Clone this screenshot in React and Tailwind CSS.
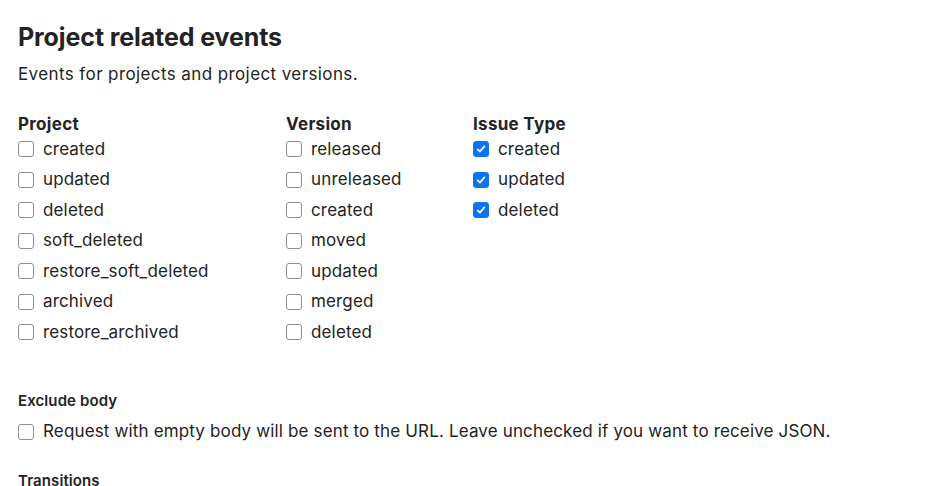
import React from 'react';

const Check = ({ checked }) => (
  <span
    className={`flex h-4 w-4 shrink-0 items-center justify-center rounded-[3px] border ${
      checked ? 'border-[#0b74f5] bg-[#0b74f5]' : 'border-[#8e8e93] bg-white'
    }`}
  >
    {checked && (
      <svg viewBox="0 0 16 16" className="h-3 w-3" fill="none">
        <path d="M3.5 8.5l3 3 6-7" stroke="white" strokeWidth="2.2" strokeLinecap="round" strokeLinejoin="round" />
      </svg>
    )}
  </span>
);

const Option = ({ label, checked = false }) => (
  <label className="flex h-[30.5px] items-center gap-[9px] text-[17px] tracking-[0.15px] text-[#232323]">
    <Check checked={checked} />
    <span>{label}</span>
  </label>
);

const Column = ({ title, items, checked = false, className = '' }) => (
  <div className={className}>
    <div className="mb-[-1px] text-[17px] font-bold leading-[22px] tracking-[0.3px] text-[#232323]">{title}</div>
    {items.map((item) => (
      <Option key={item} label={item} checked={checked} />
    ))}
  </div>
);

export default function App() {
  return (
    <div className="h-[486px] w-[936px] overflow-hidden bg-white px-[18px] pt-[21px] font-['Inter',sans-serif]">
      <h2 className="text-[25px] font-bold leading-[32px] tracking-[-0.1px] text-[#232323]">Project related events</h2>
      <p className="mt-[10px] text-[17px] leading-[22px] tracking-[0.4px] text-[#232323]">
        Events for projects and project versions.
      </p>

      <div className="mt-[28px] flex">
        <Column
          className="w-[268px]"
          title="Project"
          items={['created', 'updated', 'deleted', 'soft_deleted', 'restore_soft_deleted', 'archived', 'restore_archived']}
        />
        <Column
          className="w-[187px]"
          title="Version"
          items={['released', 'unreleased', 'created', 'moved', 'updated', 'merged', 'deleted']}
        />
        <Column title="Issue Type" items={['created', 'updated', 'deleted']} checked />
      </div>

      <div className="mt-[43px]">
        <div className="text-[15px] font-semibold leading-[20px] tracking-[0.1px] text-[#232323]">Exclude body</div>
        <div className="mt-[6px]">
          <Option label="Request with empty body will be sent to the URL. Leave unchecked if you want to receive JSON." />
        </div>
      </div>

      <div className="mt-[24px] text-[15px] font-semibold leading-[20px] tracking-[0.1px] text-[#232323]">Transitions</div>
    </div>
  );
}
